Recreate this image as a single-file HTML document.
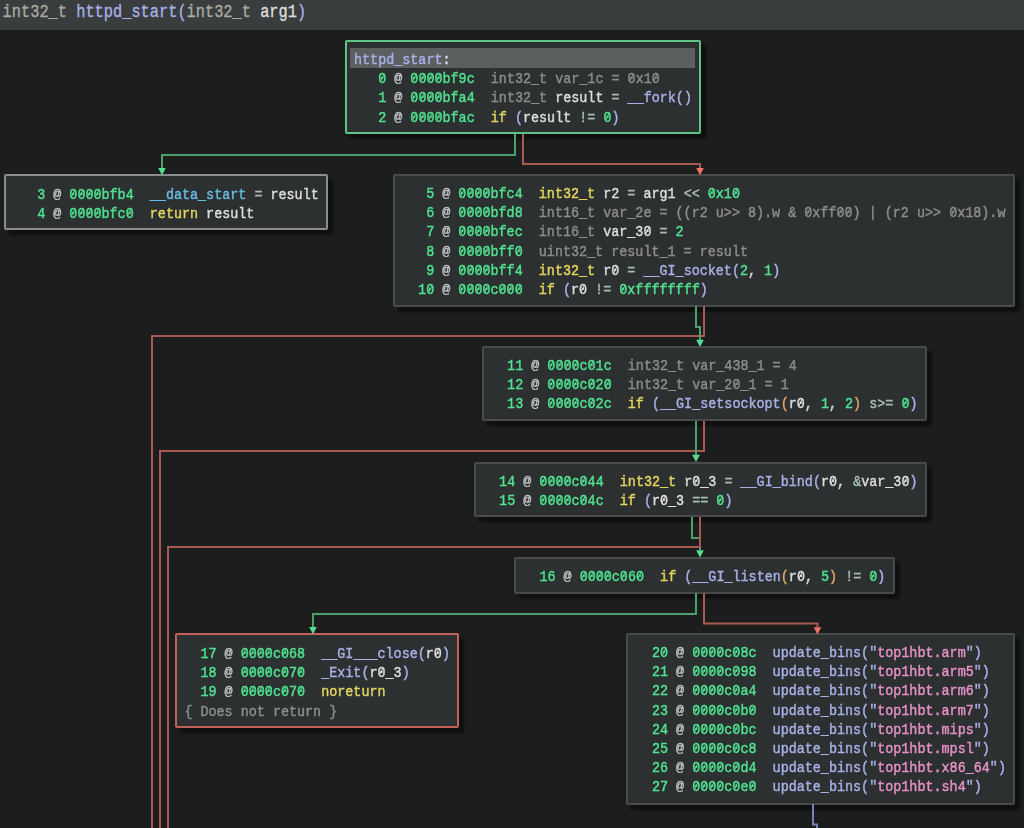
<!DOCTYPE html>
<html><head><meta charset="utf-8"><style>
html,body{margin:0;padding:0}
body{width:1024px;height:828px;background:#1c1e1d;position:relative;overflow:hidden;font-family:"Liberation Mono",monospace}
.wrap{position:absolute;left:0;top:0;width:1024px;height:828px;filter:blur(0.3px)}
.bar{position:absolute;left:0;top:0;width:1024px;height:30px;background:#393d3d}
.bar .t{position:absolute;left:2.6px;top:2.7px;font-size:15.333px;line-height:20px;white-space:pre;color:#a9aaa4;transform:scaleY(1.18);transform-origin:0 15px;-webkit-text-stroke:0.3px}
.blk{position:absolute;box-sizing:border-box;background:#2c3031;border:2px solid #484b4c;border-radius:2px;box-shadow:5px 5px 3px rgba(0,0,0,0.5)}
.blk.green{border-color:#5dc284}
.blk.red{border-color:#c2605a}
.blk.sel{border-color:#8b8d8c}
.in{position:absolute;left:7.0px;top:8.3px;right:0;bottom:0}
.row{position:absolute;left:0;white-space:pre;font-size:13.4167px;line-height:19.1px;height:19.1px;color:#dcdcdc;transform:scaleY(1.14);transform-origin:0 3.8px;-webkit-text-stroke:0.4px}
.hl{position:absolute;left:-4px;top:-1.9px;width:345.4px;height:19.6px;background:#5c5f60}
.n{color:#50e290}
.a{color:#c4c4c4;display:inline-block;transform:scaleY(0.8);transform-origin:50% 8.6px}
.g{color:#8c8d8b}
.w{color:#dedede}
.o{color:#a9bdb8}
.y{color:#e3d55e}
.l{color:#a8b0e6}
.c{color:#68bde2}
.p{color:#e691c6}
.q{color:#d8d8d8}
.r{color:#e0a466}
.z{font-weight:normal;position:relative}
.z::after{content:"";position:absolute;left:3.4px;top:2.6px;width:1.2px;height:5.7px;background:currentColor;transform:skewX(-28deg)}
</style></head><body>
<div class="wrap">
<div class="bar"><div class="t">int32_t <span class="l">httpd_start</span><span class="l">(</span>int32_t <span class="w">arg1</span><span class="l">)</span></div></div>
<div class="blk green" style="left:345px;top:40px;width:356.10px;height:93.80px"><div class="in" style="transform:translate(0px,0px)"><div class="hl"></div><div class="row" style="top:0.00px"><span class="l">httpd_start</span><span class="w">:</span></div><div class="row" style="top:19.10px"><span class="n">   <b class="z">0</b></span><span class="a"> @ </span><span class="n"><b class="z">0</b><b class="z">0</b><b class="z">0</b><b class="z">0</b>bf9c</span>  <span class="g">int32_t var_1c = <b class="z">0</b>x1<b class="z">0</b></span></div><div class="row" style="top:38.20px"><span class="n">   1</span><span class="a"> @ </span><span class="n"><b class="z">0</b><b class="z">0</b><b class="z">0</b><b class="z">0</b>bfa4</span>  <span class="g">int32_t </span><span class="w">result</span><span class="o"> = </span><span class="l">__fork()</span></div><div class="row" style="top:57.30px"><span class="n">   2</span><span class="a"> @ </span><span class="n"><b class="z">0</b><b class="z">0</b><b class="z">0</b><b class="z">0</b>bfac</span>  <span class="y">if</span> <span class="l">(</span><span class="w">result</span><span class="o"> != </span><span class="n"><b class="z">0</b></span><span class="l">)</span></div></div></div>
<div class="blk sel" style="left:4px;top:174px;width:323.90px;height:55.60px"><div class="in" style="transform:translate(0px,0.6px)"><div class="row" style="top:0.00px"><span class="n">   3</span><span class="a"> @ </span><span class="n"><b class="z">0</b><b class="z">0</b><b class="z">0</b><b class="z">0</b>bfb4</span>  <span class="c">__data_start</span><span class="o"> = </span><span class="w">result</span></div><div class="row" style="top:19.10px"><span class="n">   4</span><span class="a"> @ </span><span class="n"><b class="z">0</b><b class="z">0</b><b class="z">0</b><b class="z">0</b>bfc<b class="z">0</b></span>  <span class="y">return</span><span class="w"> result</span></div></div></div>
<div class="blk " style="left:393px;top:174px;width:621.75px;height:132.50px"><div class="in" style="transform:translate(0px,0px)"><div class="row" style="top:0.00px"><span class="n">   5</span><span class="a"> @ </span><span class="n"><b class="z">0</b><b class="z">0</b><b class="z">0</b><b class="z">0</b>bfc4</span>  <span class="y">int32_t</span><span class="w"> r2</span><span class="o"> = </span><span class="w">arg1</span><span class="o"> &lt;&lt; </span><span class="n"><b class="z">0</b>x1<b class="z">0</b></span></div><div class="row" style="top:19.10px"><span class="n">   6</span><span class="a"> @ </span><span class="n"><b class="z">0</b><b class="z">0</b><b class="z">0</b><b class="z">0</b>bfd8</span>  <span class="g">int16_t var_2e = ((r2 u&gt;&gt; 8).w &amp; <b class="z">0</b>xff<b class="z">0</b><b class="z">0</b>) | (r2 u&gt;&gt; <b class="z">0</b>x18).w</span></div><div class="row" style="top:38.20px"><span class="n">   7</span><span class="a"> @ </span><span class="n"><b class="z">0</b><b class="z">0</b><b class="z">0</b><b class="z">0</b>bfec</span>  <span class="g">int16_t </span><span class="w">var_3<b class="z">0</b></span><span class="o"> = </span><span class="n">2</span></div><div class="row" style="top:57.30px"><span class="n">   8</span><span class="a"> @ </span><span class="n"><b class="z">0</b><b class="z">0</b><b class="z">0</b><b class="z">0</b>bff<b class="z">0</b></span>  <span class="g">uint32_t result_1 = result</span></div><div class="row" style="top:76.40px"><span class="n">   9</span><span class="a"> @ </span><span class="n"><b class="z">0</b><b class="z">0</b><b class="z">0</b><b class="z">0</b>bff4</span>  <span class="y">int32_t</span><span class="w"> r<b class="z">0</b></span><span class="o"> = </span><span class="l">__GI_socket(</span><span class="n">2</span><span class="w">, </span><span class="n">1</span><span class="l">)</span></div><div class="row" style="top:95.50px"><span class="n">  1<b class="z">0</b></span><span class="a"> @ </span><span class="n"><b class="z">0</b><b class="z">0</b><b class="z">0</b><b class="z">0</b>c<b class="z">0</b><b class="z">0</b><b class="z">0</b></span>  <span class="y">if</span> <span class="l">(</span><span class="w">r<b class="z">0</b></span><span class="o"> != </span><span class="n"><b class="z">0</b>xffffffff</span><span class="l">)</span></div></div></div>
<div class="blk " style="left:482px;top:346px;width:444.65px;height:74.70px"><div class="in" style="transform:translate(0px,0px)"><div class="row" style="top:0.00px"><span class="n">  11</span><span class="a"> @ </span><span class="n"><b class="z">0</b><b class="z">0</b><b class="z">0</b><b class="z">0</b>c<b class="z">0</b>1c</span>  <span class="g">int32_t var_438_1 = 4</span></div><div class="row" style="top:19.10px"><span class="n">  12</span><span class="a"> @ </span><span class="n"><b class="z">0</b><b class="z">0</b><b class="z">0</b><b class="z">0</b>c<b class="z">0</b>2<b class="z">0</b></span>  <span class="g">int32_t var_2<b class="z">0</b>_1 = 1</span></div><div class="row" style="top:38.20px"><span class="n">  13</span><span class="a"> @ </span><span class="n"><b class="z">0</b><b class="z">0</b><b class="z">0</b><b class="z">0</b>c<b class="z">0</b>2c</span>  <span class="y">if</span> <span class="l">(__GI_setsockopt</span><span class="r">(</span><span class="w">r<b class="z">0</b>, </span><span class="n">1</span><span class="w">, </span><span class="n">2</span><span class="r">)</span><span class="o"> s&gt;= </span><span class="n"><b class="z">0</b></span><span class="l">)</span></div></div></div>
<div class="blk " style="left:474px;top:461.5px;width:452.70px;height:55.60px"><div class="in" style="transform:translate(0px,0px)"><div class="row" style="top:0.00px"><span class="n">  14</span><span class="a"> @ </span><span class="n"><b class="z">0</b><b class="z">0</b><b class="z">0</b><b class="z">0</b>c<b class="z">0</b>44</span>  <span class="y">int32_t</span><span class="w"> r<b class="z">0</b>_3</span><span class="o"> = </span><span class="l">__GI_bind(</span><span class="w">r<b class="z">0</b>, </span><span class="o">&amp;</span><span class="w">var_3<b class="z">0</b></span><span class="l">)</span></div><div class="row" style="top:19.10px"><span class="n">  15</span><span class="a"> @ </span><span class="n"><b class="z">0</b><b class="z">0</b><b class="z">0</b><b class="z">0</b>c<b class="z">0</b>4c</span>  <span class="y">if</span> <span class="l">(</span><span class="w">r<b class="z">0</b>_3</span><span class="o"> == </span><span class="n"><b class="z">0</b></span><span class="l">)</span></div></div></div>
<div class="blk " style="left:514.3px;top:557px;width:380.25px;height:36.50px"><div class="in" style="transform:translate(0px,0px)"><div class="row" style="top:0.00px"><span class="n">  16</span><span class="a"> @ </span><span class="n"><b class="z">0</b><b class="z">0</b><b class="z">0</b><b class="z">0</b>c<b class="z">0</b>6<b class="z">0</b></span>  <span class="y">if</span> <span class="l">(__GI_listen</span><span class="r">(</span><span class="w">r<b class="z">0</b>, </span><span class="n">5</span><span class="r">)</span><span class="o"> != </span><span class="n"><b class="z">0</b></span><span class="l">)</span></div></div></div>
<div class="blk red" style="left:175.4px;top:633px;width:283.65px;height:94.60px"><div class="in" style="transform:translate(0px,0.4px)"><div class="row" style="top:0.00px"><span class="n">  17</span><span class="a"> @ </span><span class="n"><b class="z">0</b><b class="z">0</b><b class="z">0</b><b class="z">0</b>c<b class="z">0</b>68</span>  <span class="l">__GI___close(</span><span class="w">r<b class="z">0</b></span><span class="l">)</span></div><div class="row" style="top:19.10px"><span class="n">  18</span><span class="a"> @ </span><span class="n"><b class="z">0</b><b class="z">0</b><b class="z">0</b><b class="z">0</b>c<b class="z">0</b>7<b class="z">0</b></span>  <span class="l">_Exit(</span><span class="w">r<b class="z">0</b>_3</span><span class="l">)</span></div><div class="row" style="top:38.20px"><span class="n">  19</span><span class="a"> @ </span><span class="n"><b class="z">0</b><b class="z">0</b><b class="z">0</b><b class="z">0</b>c<b class="z">0</b>7<b class="z">0</b></span>  <span class="y">noreturn</span></div><div class="row" style="top:57.30px"><span class="g">{ Does not return }</span></div></div></div>
<div class="blk " style="left:626px;top:633px;width:389.27px;height:171.60px"><div class="in" style="transform:translate(0.8px,0px)"><div class="row" style="top:0.00px"><span class="n">  2<b class="z">0</b></span><span class="a"> @ </span><span class="n"><b class="z">0</b><b class="z">0</b><b class="z">0</b><b class="z">0</b>c<b class="z">0</b>8c</span>  <span class="l">update_bins(</span><span class="l">"</span><span class="p">top1hbt.arm</span><span class="l">"</span><span class="l">)</span></div><div class="row" style="top:19.10px"><span class="n">  21</span><span class="a"> @ </span><span class="n"><b class="z">0</b><b class="z">0</b><b class="z">0</b><b class="z">0</b>c<b class="z">0</b>98</span>  <span class="l">update_bins(</span><span class="l">"</span><span class="p">top1hbt.arm5</span><span class="l">"</span><span class="l">)</span></div><div class="row" style="top:38.20px"><span class="n">  22</span><span class="a"> @ </span><span class="n"><b class="z">0</b><b class="z">0</b><b class="z">0</b><b class="z">0</b>c<b class="z">0</b>a4</span>  <span class="l">update_bins(</span><span class="l">"</span><span class="p">top1hbt.arm6</span><span class="l">"</span><span class="l">)</span></div><div class="row" style="top:57.30px"><span class="n">  23</span><span class="a"> @ </span><span class="n"><b class="z">0</b><b class="z">0</b><b class="z">0</b><b class="z">0</b>c<b class="z">0</b>b<b class="z">0</b></span>  <span class="l">update_bins(</span><span class="l">"</span><span class="p">top1hbt.arm7</span><span class="l">"</span><span class="l">)</span></div><div class="row" style="top:76.40px"><span class="n">  24</span><span class="a"> @ </span><span class="n"><b class="z">0</b><b class="z">0</b><b class="z">0</b><b class="z">0</b>c<b class="z">0</b>bc</span>  <span class="l">update_bins(</span><span class="l">"</span><span class="p">top1hbt.mips</span><span class="l">"</span><span class="l">)</span></div><div class="row" style="top:95.50px"><span class="n">  25</span><span class="a"> @ </span><span class="n"><b class="z">0</b><b class="z">0</b><b class="z">0</b><b class="z">0</b>c<b class="z">0</b>c8</span>  <span class="l">update_bins(</span><span class="l">"</span><span class="p">top1hbt.mpsl</span><span class="l">"</span><span class="l">)</span></div><div class="row" style="top:114.60px"><span class="n">  26</span><span class="a"> @ </span><span class="n"><b class="z">0</b><b class="z">0</b><b class="z">0</b><b class="z">0</b>c<b class="z">0</b>d4</span>  <span class="l">update_bins(</span><span class="l">"</span><span class="p">top1hbt.x86_64</span><span class="l">"</span><span class="l">)</span></div><div class="row" style="top:133.70px"><span class="n">  27</span><span class="a"> @ </span><span class="n"><b class="z">0</b><b class="z">0</b><b class="z">0</b><b class="z">0</b>c<b class="z">0</b>e<b class="z">0</b></span>  <span class="l">update_bins(</span><span class="l">"</span><span class="p">top1hbt.sh4</span><span class="l">"</span><span class="l">)</span></div></div></div>

<svg width="1024" height="828" style="position:absolute;left:0;top:0">
<g fill="none" stroke-width="2" stroke-linejoin="miter">
<path d="M515 134 V155 H162 V168" stroke="#4ba06e"/>
<path d="M523 134 V164 H700 V168" stroke="#aa5852"/>
<path d="M704 306 V336 H152 V830" stroke="#aa5852"/>
<path d="M696 306 V327 H700 V340" stroke="#4ba06e"/>
<path d="M704 421 V451 H160 V830" stroke="#aa5852"/>
<path d="M696 421 V455" stroke="#4ba06e"/>
<path d="M692 517 V538 H700 V550" stroke="#4ba06e"/>
<path d="M700 517 V547 H168 V830" stroke="#aa5852"/>
<path d="M696 593 V614 H313 V627" stroke="#4ba06e"/>
<path d="M704 593 V623.5 H817.5 V627" stroke="#aa5852"/>
<path d="M813 804 V824.5 H817 V830" stroke="#7880b6"/>
</g>
<path d="M158.2 167.89999999999998 L165.8 167.89999999999998 L162 175.2 Z" fill="#54de92"/><path d="M696.2 167.89999999999998 L703.8 167.89999999999998 L700 175.2 Z" fill="#f27466"/><path d="M696.2 339.7 L703.8 339.7 L700 347 Z" fill="#54de92"/><path d="M692.2 454.7 L699.8 454.7 L696 462 Z" fill="#54de92"/><path d="M696.2 550.2 L703.8 550.2 L700 557.5 Z" fill="#54de92"/><path d="M309.2 626.9000000000001 L316.8 626.9000000000001 L313 634.2 Z" fill="#54de92"/><path d="M813.7 627.2 L821.3 627.2 L817.5 634.5 Z" fill="#f27466"/>
</svg>
</div>
</body></html>
